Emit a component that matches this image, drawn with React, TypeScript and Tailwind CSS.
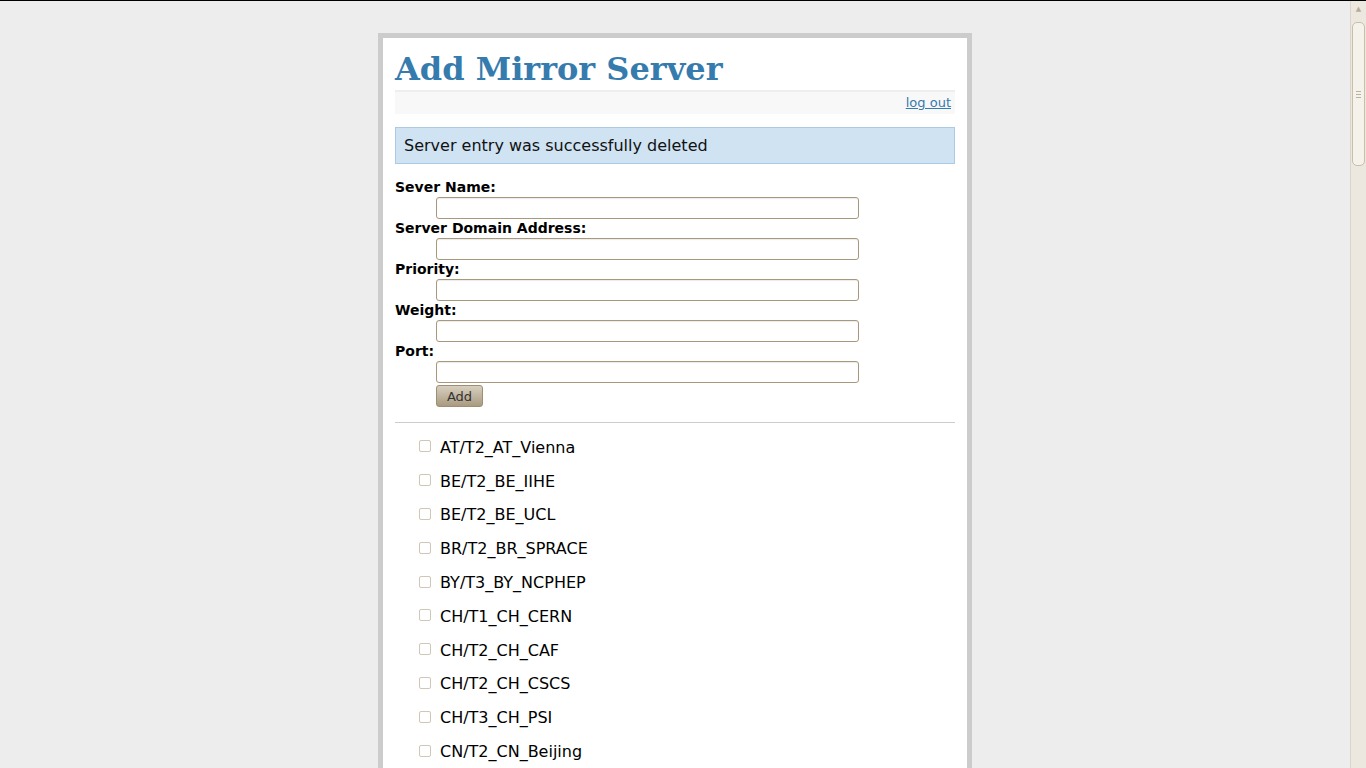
import React from "react";

const sites = [
  "AT/T2_AT_Vienna",
  "BE/T2_BE_IIHE",
  "BE/T2_BE_UCL",
  "BR/T2_BR_SPRACE",
  "BY/T3_BY_NCPHEP",
  "CH/T1_CH_CERN",
  "CH/T2_CH_CAF",
  "CH/T2_CH_CSCS",
  "CH/T3_CH_PSI",
  "CN/T2_CN_Beijing",
  "DE/T1_DE_KIT",
  "DE/T2_DE_DESY",
  "DE/T2_DE_RWTH",
  "EE/T2_EE_Estonia",
  "ES/T1_ES_PIC",
];

const fields = ["Sever Name:", "Server Domain Address:", "Priority:", "Weight:", "Port:"];

function Scrollbar() {
  return (
    <div className="w-4 shrink-0 h-full bg-[#ece8df] border-l border-[#ddd6c8] flex flex-col items-center">
      <div className="h-[16px] w-full flex items-center justify-center text-[7px] text-[#b5ab98]">▲</div>
      <div className="mt-[5px] w-[13px] h-[144px] rounded-[5px] border border-[#c9bea9] bg-[#f5f2ec] flex flex-col items-center justify-center gap-[2px]">
        <div className="w-[5px] h-px bg-[#bcb19c]" />
        <div className="w-[5px] h-px bg-[#bcb19c]" />
        <div className="w-[5px] h-px bg-[#bcb19c]" />
      </div>
    </div>
  );
}

export default function App() {
  return (
    <div className="h-screen w-full flex overflow-hidden bg-[#ededed] border-t border-black" style={{ fontFamily: '"DejaVu Sans", sans-serif' }}>
      <div className="flex-1 h-full overflow-hidden">
        <div className="w-[594px] mx-auto mt-[32px] bg-white border-[5px] border-[#cccccc] px-[12px] pb-10">
          {/* heading */}
          <h1
            className="text-[#367bad] text-[32px] font-bold leading-[40px] pt-[11px] pb-[1px]"
            style={{ fontFamily: '"DejaVu Serif", serif' }}
          >
            Add Mirror Server
          </h1>
          <div className="border-t-2 border-[#eeeeee] bg-[#f8f8f8] h-[24px] flex items-end justify-end pr-[4px] pb-[3px]">
            <a href="#" className="text-[#367bad] underline text-[13px] leading-[16px]">
              log out
            </a>
          </div>

          {/* message */}
          <div className="mt-[13px] border border-[#a9cbe6] bg-[#cfe3f3] px-[8px] h-[37px] flex items-center text-[16px] text-[#111]">
            Server entry was successfully deleted
          </div>

          {/* form */}
          <form className="mt-[15px]" onSubmit={(e) => e.preventDefault()}>
            {fields.map((f) => (
              <div key={f} className="mb-[1px]">
                <label className="block text-[14px] font-bold leading-[16px] text-black">{f}</label>
                <input
                  type="text"
                  className="ml-[41px] mt-[2px] block w-[423px] h-[22px] border border-[#a8987c] rounded-[3px] bg-white shadow-[inset_0_1px_1px_rgba(0,0,0,0.08)]"
                />
              </div>
            ))}
            <button
              type="submit"
              className="block ml-[41px] mt-[2px] w-[47px] h-[22px] rounded-[3px] border border-[#9d8e74] bg-gradient-to-b from-[#d8cfbf] to-[#a99b81] text-[13px] text-[#333] leading-none"
            >
              Add
            </button>
          </form>

          <div className="mt-[15px] border-t border-[#cccccc]" />

          {/* sites */}
          <ul className="pl-[24px] pt-[8px]">
            {sites.map((s) => (
              <li key={s} className="flex items-center h-[33.8px] text-[16px] text-black">
                <input
                  type="checkbox"
                  className="appearance-none w-[12px] h-[12px] border border-[#cfc6b5] rounded-[2px] bg-white mr-[9px] -mt-[3px]"
                />
                <span>{s}</span>
              </li>
            ))}
          </ul>
        </div>
      </div>
      <Scrollbar />
    </div>
  );
}
